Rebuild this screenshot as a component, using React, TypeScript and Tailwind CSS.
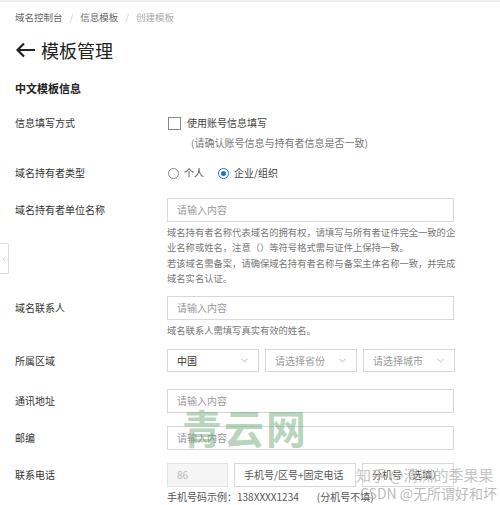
import { ChevronDown, ChevronLeft } from 'lucide-react';

const font = { fontFamily: '"Noto Sans CJK SC", "Noto Sans", sans-serif' };

function Label({ children }: { children: React.ReactNode }) {
  return <div className="w-[152px] shrink-0 text-[10px] leading-6 text-[#333]">{children}</div>;
}

function TextInput({ placeholder, className = '' }: { placeholder: string; className?: string }) {
  return (
    <div
      className={`h-6 border border-[#d9d9d9] bg-white px-[9px] text-[10px] leading-[22px] text-[#999] ${className}`}
    >
      {placeholder}
    </div>
  );
}

function Select({ value, muted }: { value: string; muted?: boolean }) {
  return (
    <div className="flex h-[23px] w-[92px] items-center justify-between border border-[#d9d9d9] bg-white pl-[9px] pr-[8px] text-[10px]">
      <span className={muted ? 'text-[#999]' : 'text-[#333]'}>{value}</span>
      <ChevronDown size={11} strokeWidth={1.3} className="text-[#888]" />
    </div>
  );
}

export default function App() {
  return (
    <div className="relative h-[505px] w-[500px] overflow-hidden border-t-2 border-[#eee] bg-white" style={font}>
      <div className="px-[15px]">
        {/* breadcrumb */}
        <div className="mt-[8px] flex items-center gap-[7px] text-[9.5px] leading-[14px]">
          <span className="text-[#666]">域名控制台</span>
          <span className="text-[#ccc]">/</span>
          <span className="text-[#666]">信息模板</span>
          <span className="text-[#ccc]">/</span>
          <span className="text-[#aaa]">创建模板</span>
        </div>

        {/* title */}
        <div className="mt-[13px] flex h-[26px] items-center gap-[5px]">
          <svg width="21" height="16" viewBox="0 0 21 16" fill="none" stroke="#222" strokeWidth="2.2">
            <path d="M20 8H2.5M9 1.5L2.5 8l6.5 6.5" />
          </svg>
          <span className="text-[18px] leading-[26px] text-[#222]">模板管理</span>
        </div>

        <div className="mt-[17px] text-[11px] font-bold leading-4 text-[#222]">中文模板信息</div>

        {/* 信息填写方式 */}
        <div className="mt-[19px] flex items-center">
          <div className="w-[153px] shrink-0 text-[10px] leading-4 text-[#333]">信息填写方式</div>
          <div className="h-[13px] w-[13px] border border-[#888] bg-white" />
          <span className="ml-[6px] text-[10px] leading-4 text-[#444]">使用账号信息填写</span>
        </div>
        <div className="mt-[5px] pl-[176px] text-[10px] leading-[14px] text-[#777]">
          (请确认账号信息与持有者信息是否一致)
        </div>

        {/* 域名持有者类型 */}
        <div className="mt-[15px] flex items-center">
          <div className="w-[153px] shrink-0 text-[10px] leading-4 text-[#333]">域名持有者类型</div>
          <div className="h-[11px] w-[11px] rounded-full border border-[#888]" />
          <span className="ml-[5px] text-[10px] leading-4 text-[#444]">个人</span>
          <div className="ml-[14px] flex h-[11px] w-[11px] items-center justify-center rounded-full border border-[#1e6fd9]">
            <div className="h-[5px] w-[5px] rounded-full bg-[#1e6fd9]" />
          </div>
          <span className="ml-[5px] text-[10px] leading-4 text-[#444]">企业/组织</span>
        </div>

        {/* 单位名称 */}
        <div className="mt-[17px] flex">
          <Label>域名持有者单位名称</Label>
          <div className="w-[287px]">
            <TextInput placeholder="请输入内容" />
            <div className="mt-[3px] text-[9.3px] leading-[15.4px] text-[#777]">
              <div className="whitespace-nowrap">域名持有者名称代表域名的拥有权，请填写与所有者证件完全一致的企</div>
              <div className="whitespace-nowrap">业名称或姓名，注意（）等符号格式需与证件上保持一致。</div>
              <div className="whitespace-nowrap">若该域名需备案，请确保域名持有者名称与备案主体名称一致，并完成</div>
              <div className="whitespace-nowrap">域名实名认证。</div>
            </div>
          </div>
        </div>

        {/* 域名联系人 */}
        <div className="mt-[9px] flex">
          <Label>域名联系人</Label>
          <div className="w-[287px]">
            <TextInput placeholder="请输入内容" />
            <div className="mt-[3px] text-[9.3px] leading-[15px] text-[#777]">域名联系人需填写真实有效的姓名。</div>
          </div>
        </div>

        {/* 所属区域 */}
        <div className="mt-[11px] flex items-center">
          <Label>所属区域</Label>
          <div className="flex gap-[6px]">
            <Select value="中国" />
            <Select value="请选择省份" muted />
            <Select value="请选择城市" muted />
          </div>
        </div>

        {/* 通讯地址 */}
        <div className="mt-[16px] flex">
          <Label>通讯地址</Label>
          <TextInput placeholder="请输入内容" className="w-[287px]" />
        </div>

        {/* 邮编 */}
        <div className="mt-[13px] flex">
          <Label>邮编</Label>
          <TextInput placeholder="请输入内容" className="w-[287px]" />
        </div>

        {/* 联系电话 */}
        <div className="mt-[13px] flex">
          <Label>联系电话</Label>
          <div className="flex gap-[6px]">
            <div className="h-6 w-[61px] border border-[#e3e3e3] bg-[#f5f5f5] px-[9px] text-[10px] leading-[22px] text-[#bbb]">
              86
            </div>
            <div className="h-6 w-[122px] border border-[#d9d9d9] px-[9px] text-[10px] leading-[22px] text-[#555]">
              手机号/区号+固定电话
            </div>
            <div className="h-6 w-[92px] border border-[#d9d9d9] px-[9px] text-[10px] leading-[22px] text-[#555]">
              分机号（选填）
            </div>
          </div>
        </div>
        <div className="mt-[3px] whitespace-nowrap pl-[152px] text-[10px] leading-[14px] text-[#555]">
          手机号码示例：138XXXX1234<span className="ml-[18px]">(分机号不填)</span>
        </div>
      </div>

      {/* side collapse tab */}
      <div className="absolute left-0 top-[241px] flex h-[31px] w-[9px] items-center justify-center rounded-r-[2px] border border-l-0 border-[#ddd] bg-white">
        <ChevronLeft size={10} strokeWidth={1.5} className="text-[#aaa]" />
      </div>

      {/* watermarks */}
      <div className="pointer-events-none absolute left-[182px] top-[400px] text-[40px] font-bold leading-[50px] tracking-[2px] text-[#5f9f6c]/45">
        青云网
      </div>
      <div className="pointer-events-none absolute left-[356px] top-[464px] whitespace-nowrap text-[15px] leading-[18px] text-[#b5b5b5]/80">
        知乎 @清洲的季果果
      </div>
      <div className="pointer-events-none absolute left-[360px] top-[482px] whitespace-nowrap text-[14px] leading-[18px] text-[#aaa]/80">
        CSDN @无所谓好和坏
      </div>
    </div>
  );
}
